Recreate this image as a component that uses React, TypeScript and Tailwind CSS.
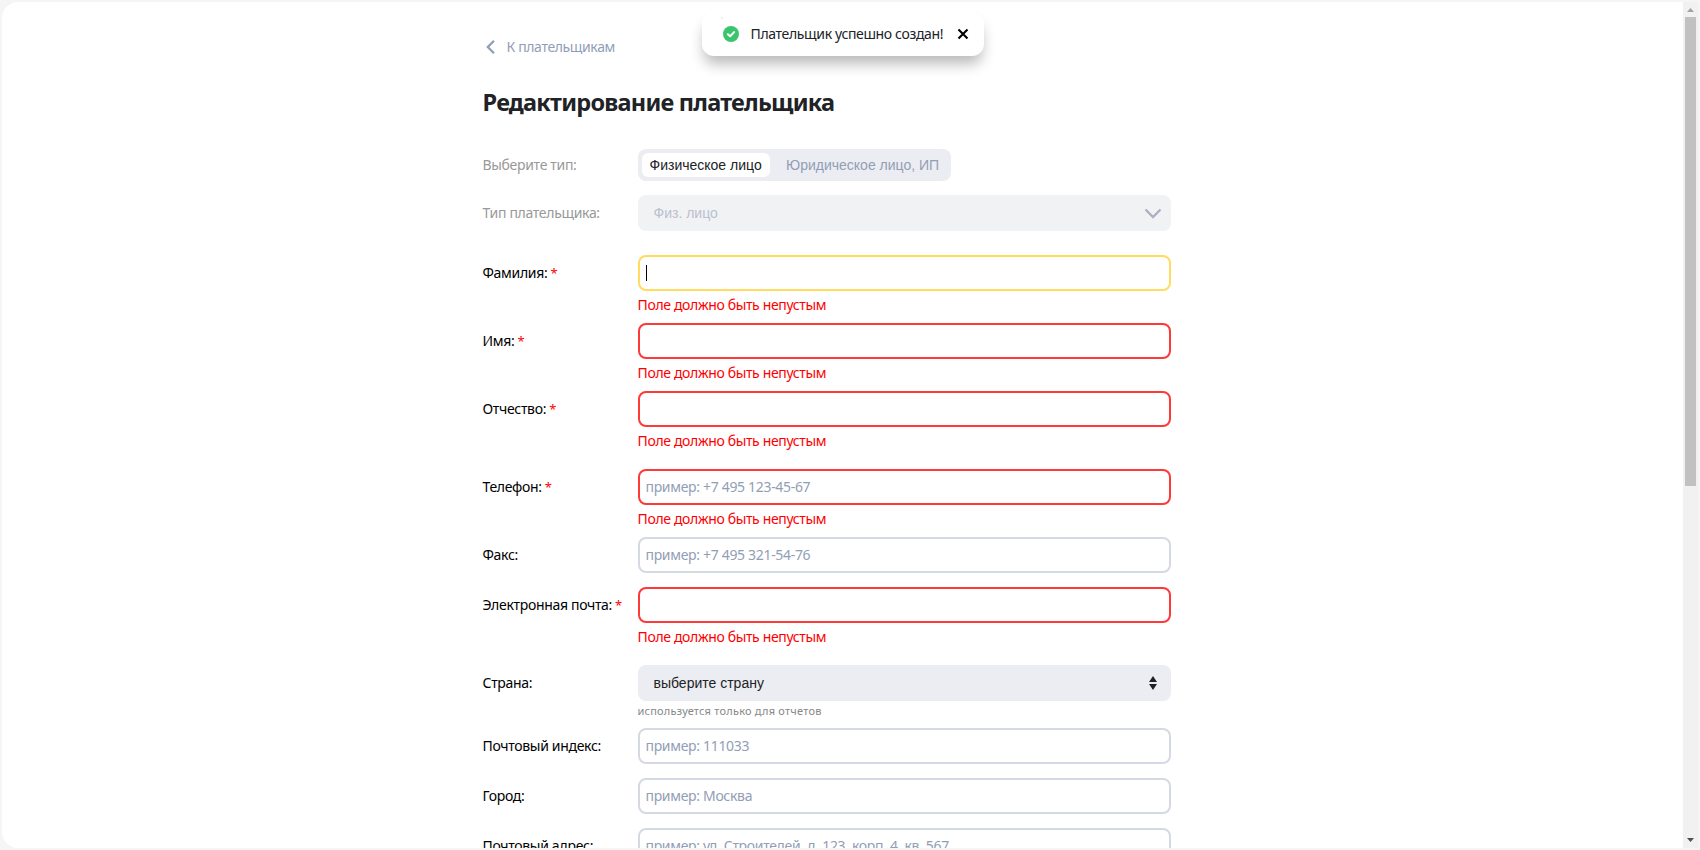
import type { ReactNode } from 'react';

const EMPTY_ERROR = 'Поле должно быть непустым';

type FieldProps = {
  label: string;
  required?: boolean;
  placeholder?: string;
  error?: boolean;
  focused?: boolean;
};

function Label({ children, required, muted }: { children: ReactNode; required?: boolean; muted?: boolean }) {
  return (
    <div className={`flex h-9 w-[156px] shrink-0 items-center pl-[0.5px] whitespace-pre ${muted ? 'text-[#999999]' : 'text-black'}`}>
      {children}
      {required && <span className="text-[13px] text-[#ff0000]"> *</span>}
    </div>
  );
}

function Field({ label, required, placeholder, error, focused }: FieldProps) {
  const border = focused ? 'border-[#ffdb60]' : error ? 'border-[#ff3838]' : 'border-[#d5d9e4]';
  return (
    <div className="flex">
      <Label required={required}>{label}</Label>
      <div className="w-[533px]">
        <div className={`flex h-9 items-center rounded-lg border-2 bg-white pl-[5.5px] text-[#929eb5] ${border}`}>
          {focused ? <span className="ml-[0.5px] h-4 w-px bg-black" /> : placeholder}
        </div>
        {error && <div className="-ml-[0.5px] h-8 pt-1 tracking-[-0.35px] text-[#ff0000]">{EMPTY_ERROR}</div>}
      </div>
    </div>
  );
}

function Toast() {
  return (
    <div className="absolute left-[702px] top-3 flex h-11 w-[282px] items-center rounded-xl bg-white pl-[21px] text-[#212226] shadow-[0_10px_14px_-2px_rgba(0,0,0,0.27)]">
      <span className="absolute left-[19px] top-[5px] size-0.5 bg-[#eeeeee]" />
      <svg className="size-4" viewBox="0 0 16 16">
        <circle cx="8" cy="8" r="8" fill="#3bc46e" />
        <path d="M4.9 8.2 7.1 10.3 11.1 6.1" fill="none" stroke="#fff" strokeWidth="2" strokeLinecap="round" strokeLinejoin="round" />
      </svg>
      <span className="ml-[11px] w-[207.5px] pl-[0.5px] tracking-[-0.35px]">Плательщик успешно создан!</span>
      <svg className="size-2.5 overflow-visible" viewBox="0 0 10 10">
        <path d="M.5.5l9 9M9.5.5l-9 9" stroke="#000" strokeWidth="2.1" />
      </svg>
    </div>
  );
}

function Scrollbar() {
  return (
    <div className="flex w-[15px] flex-col justify-between bg-[#f1f1f1]">
      <div className="flex flex-col items-center">
        <svg className="h-[15px] w-[15px]" viewBox="0 0 15 15">
          <path d="M4 10h7L7.5 6z" fill="#a3a3a3" />
        </svg>
        <div className="h-[469px] w-[11px] bg-[#c1c1c1]" />
      </div>
      <svg className="h-[15px] w-[15px]" viewBox="0 0 15 15">
        <path d="M4 5h7L7.5 9z" fill="#505050" />
      </svg>
    </div>
  );
}

export default function App() {
  return (
    <div className="relative h-[850px] w-[1700px] overflow-hidden bg-[#f5f5f5] p-0.5 font-['Noto_Sans','Open_Sans',sans-serif] text-[14px] leading-5 tracking-[-0.32px]">
      <div className="flex h-full overflow-hidden rounded-l-[16px] bg-white">
        <main className="h-full flex-1 overflow-hidden pl-[480px] pt-[35px]">
          <a className="flex h-5 items-center text-[#929eb8]">
            <svg className="ml-1 h-3.5 w-[9px] overflow-visible" viewBox="0 0 9 14">
              <path d="M8 .8 1.8 7 8 13.2" fill="none" stroke="currentColor" strokeWidth="2.3" />
            </svg>
            <span className="ml-[11.5px] tracking-[-0.37px]">К плательщикам</span>
          </a>
          <h1 className="mt-[29px] h-8 pl-[0.5px] text-[23.5px] leading-8 font-bold tracking-[-0.76px] text-[#212226]">Редактирование плательщика</h1>

          <div className="mt-[31px] flex h-8 items-center">
            <Label muted>Выберите тип:</Label>
            <div className="flex h-8 w-[313px] items-center rounded-lg bg-[#ecedf2] px-1 font-['Liberation_Sans',sans-serif] text-sm tracking-normal">
              <div className="flex h-6 w-32 items-center rounded-md bg-white pl-[7.5px] text-[#212226]">Физическое лицо</div>
              <div className="pl-4 text-[#929eb5]">Юридическое лицо, ИП</div>
            </div>
          </div>
          <div className="mt-3.5 flex">
            <Label muted>Тип плательщика:</Label>
            <div className="flex h-9 w-[533px] items-center justify-between rounded-lg bg-[#f1f2f4] pr-[10px] pl-[15.5px] font-['Liberation_Sans',sans-serif] text-sm tracking-normal text-[#b9c0d0]">
              Физ. лицо
              <svg className="h-[9px] w-4 overflow-visible" viewBox="0 0 16 9">
                <path d="M.5.5 8 8 15.5.5" fill="none" stroke="#a9b0c4" strokeWidth="2.3" />
              </svg>
            </div>
          </div>

          <div className="mt-6">
            <Field label="Фамилия:" required error focused />
            <Field label="Имя:" required error />
            <Field label="Отчество:" required error />
          </div>
          <div className="mt-[10px]">
            <Field label="Телефон:" required error placeholder="пример: +7 495 123-45-67" />
            <Field label="Факс:" placeholder="пример: +7 495 321-54-76" />
          </div>
          <div className="mt-[14px]">
            <Field label="Электронная почта:" required error />
          </div>

          <div className="mt-[10px] flex">
            <Label>Страна:</Label>
            <div className="w-[533px]">
              <div className="flex h-9 items-center justify-between rounded-lg bg-[#ecedf2] pr-[14px] pl-[15.5px] font-['Liberation_Sans',sans-serif] text-sm tracking-normal text-[#212226]">
                выберите страну
                <svg className="h-3.5 w-2" viewBox="0 0 8 14">
                  <path d="M4 0 8 6H0zM4 14 0 8h8z" fill="#212226" />
                </svg>
              </div>
              <div className="-ml-[0.5px] h-[27px] pt-[2px] text-[11px] leading-4 tracking-[0.22px] text-[#888888]">используется только для отчетов</div>
            </div>
          </div>
          <div className="flex flex-col gap-[14px]">
            <Field label="Почтовый индекс:" placeholder="пример: 111033" />
            <Field label="Город:" placeholder="пример: Москва" />
            <Field label="Почтовый адрес:" placeholder="пример: ул. Строителей, д. 123, корп. 4, кв. 567" />
          </div>
        </main>
        <Scrollbar />
      </div>
      <Toast />
    </div>
  );
}
